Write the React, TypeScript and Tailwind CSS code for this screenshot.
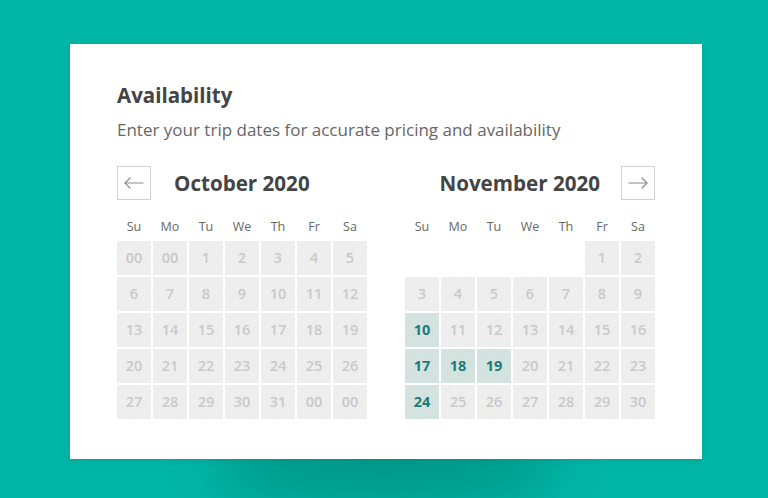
const DAYS = ['Su', 'Mo', 'Tu', 'We', 'Th', 'Fr', 'Sa'];

type Cell = { label: string; selected?: boolean } | null;

const october: Cell[] = [
  '00', '00', ...Array.from({ length: 31 }, (_, i) => String(i + 1)), '00', '00',
].map((label) => ({ label }));

const SELECTED = new Set([10, 17, 18, 19, 24]);
const november: Cell[] = [
  null, null, null, null, null,
  ...Array.from({ length: 30 }, (_, i) => ({ label: String(i + 1), selected: SELECTED.has(i + 1) })),
];

const hatch =
  'bg-[repeating-linear-gradient(135deg,#f0f0f0_0px,#f0f0f0_1px,#ebebeb_1px,#ebebeb_2px)]';
const hatchSel =
  'bg-[repeating-linear-gradient(135deg,#d6e5e2_0px,#d6e5e2_1px,#d0e1dd_1px,#d0e1dd_2px)]';

function Arrow({ dir }: { dir: 'prev' | 'next' }) {
  return (
    <svg width="20" height="12" viewBox="0 0 20 12" fill="none" stroke="currentColor" strokeWidth="1.2" strokeLinecap="round" strokeLinejoin="round">
      {dir === 'prev' ? (
        <>
          <path d="M1 6h18" />
          <path d="M6 1 1 6l5 5" />
        </>
      ) : (
        <>
          <path d="M1 6h18" />
          <path d="M14 1l5 5-5 5" />
        </>
      )}
    </svg>
  );
}

function NavButton({ dir }: { dir: 'prev' | 'next' }) {
  return (
    <button className="flex h-[34px] w-[34px] items-center justify-center border border-[#d2d2d2] bg-white text-[#8a8a8a]">
      <Arrow dir={dir} />
    </button>
  );
}

function Month({ title, cells, side }: { title: string; cells: Cell[]; side: 'left' | 'right' }) {
  return (
    <div className="w-[250px]">
      {/* month header */}
      <div className={`flex h-[34px] items-center ${side === 'right' ? 'justify-end' : ''}`}>
        {side === 'left' && <NavButton dir="prev" />}
        <span
          className={`text-[20.6px] font-bold leading-none text-[#444] ${side === 'left' ? 'ml-[23px]' : 'mr-[21px]'}`}
        >
          {title}
        </span>
        {side === 'right' && <NavButton dir="next" />}
      </div>

      {/* weekday names */}
      <div className="mt-[19px] grid grid-cols-[repeat(7,34px)] gap-x-[2px]">
        {DAYS.map((d) => (
          <span key={d} className="text-center text-[12.5px] leading-4 text-[#666]">{d}</span>
        ))}
      </div>

      {/* day grid */}
      <div className="mt-[6px] grid grid-cols-[repeat(7,34px)] gap-[2px]">
        {cells.map((c, i) =>
          c ? (
            <div
              key={i}
              className={`flex h-[34px] items-center justify-center text-[14.5px] ${c.selected ? `${hatchSel} font-bold text-[#1f7b77]` : `${hatch} font-semibold text-[#c9c9c9]`}`}
            >
              {c.label}
            </div>
          ) : (
            <div key={i} className="h-[34px]" />
          ),
        )}
      </div>
    </div>
  );
}

export default function App() {
  return (
    <div
      className="relative min-h-[498px] w-full overflow-hidden bg-[#00b6a6] pl-[70px] pt-[44px]"
      style={{ fontFamily: '"Open Sans", "Noto Sans", sans-serif' }}
    >
      {/* soft shadow under the card */}
      <div className="absolute left-[210px] top-[440px] h-[60px] w-[350px] rounded-[50%] bg-[#00806f] opacity-60 blur-[24px]" />

      <div className="relative h-[415px] w-[632px] bg-white px-[47px] pt-[37px] shadow-[0_2px_6px_rgba(0,80,70,0.15)]">
        <h2 className="text-[20.5px] font-bold leading-7 text-[#444]">Availability</h2>
        <p className="mt-[9px] text-[17px] leading-6 text-[#666]">
          Enter your trip dates for accurate pricing and availability
        </p>

        <div className="mt-[24px] flex gap-[38px]">
          <Month title="October 2020" cells={october} side="left" />
          <Month title="November 2020" cells={november} side="right" />
        </div>
      </div>
    </div>
  );
}
